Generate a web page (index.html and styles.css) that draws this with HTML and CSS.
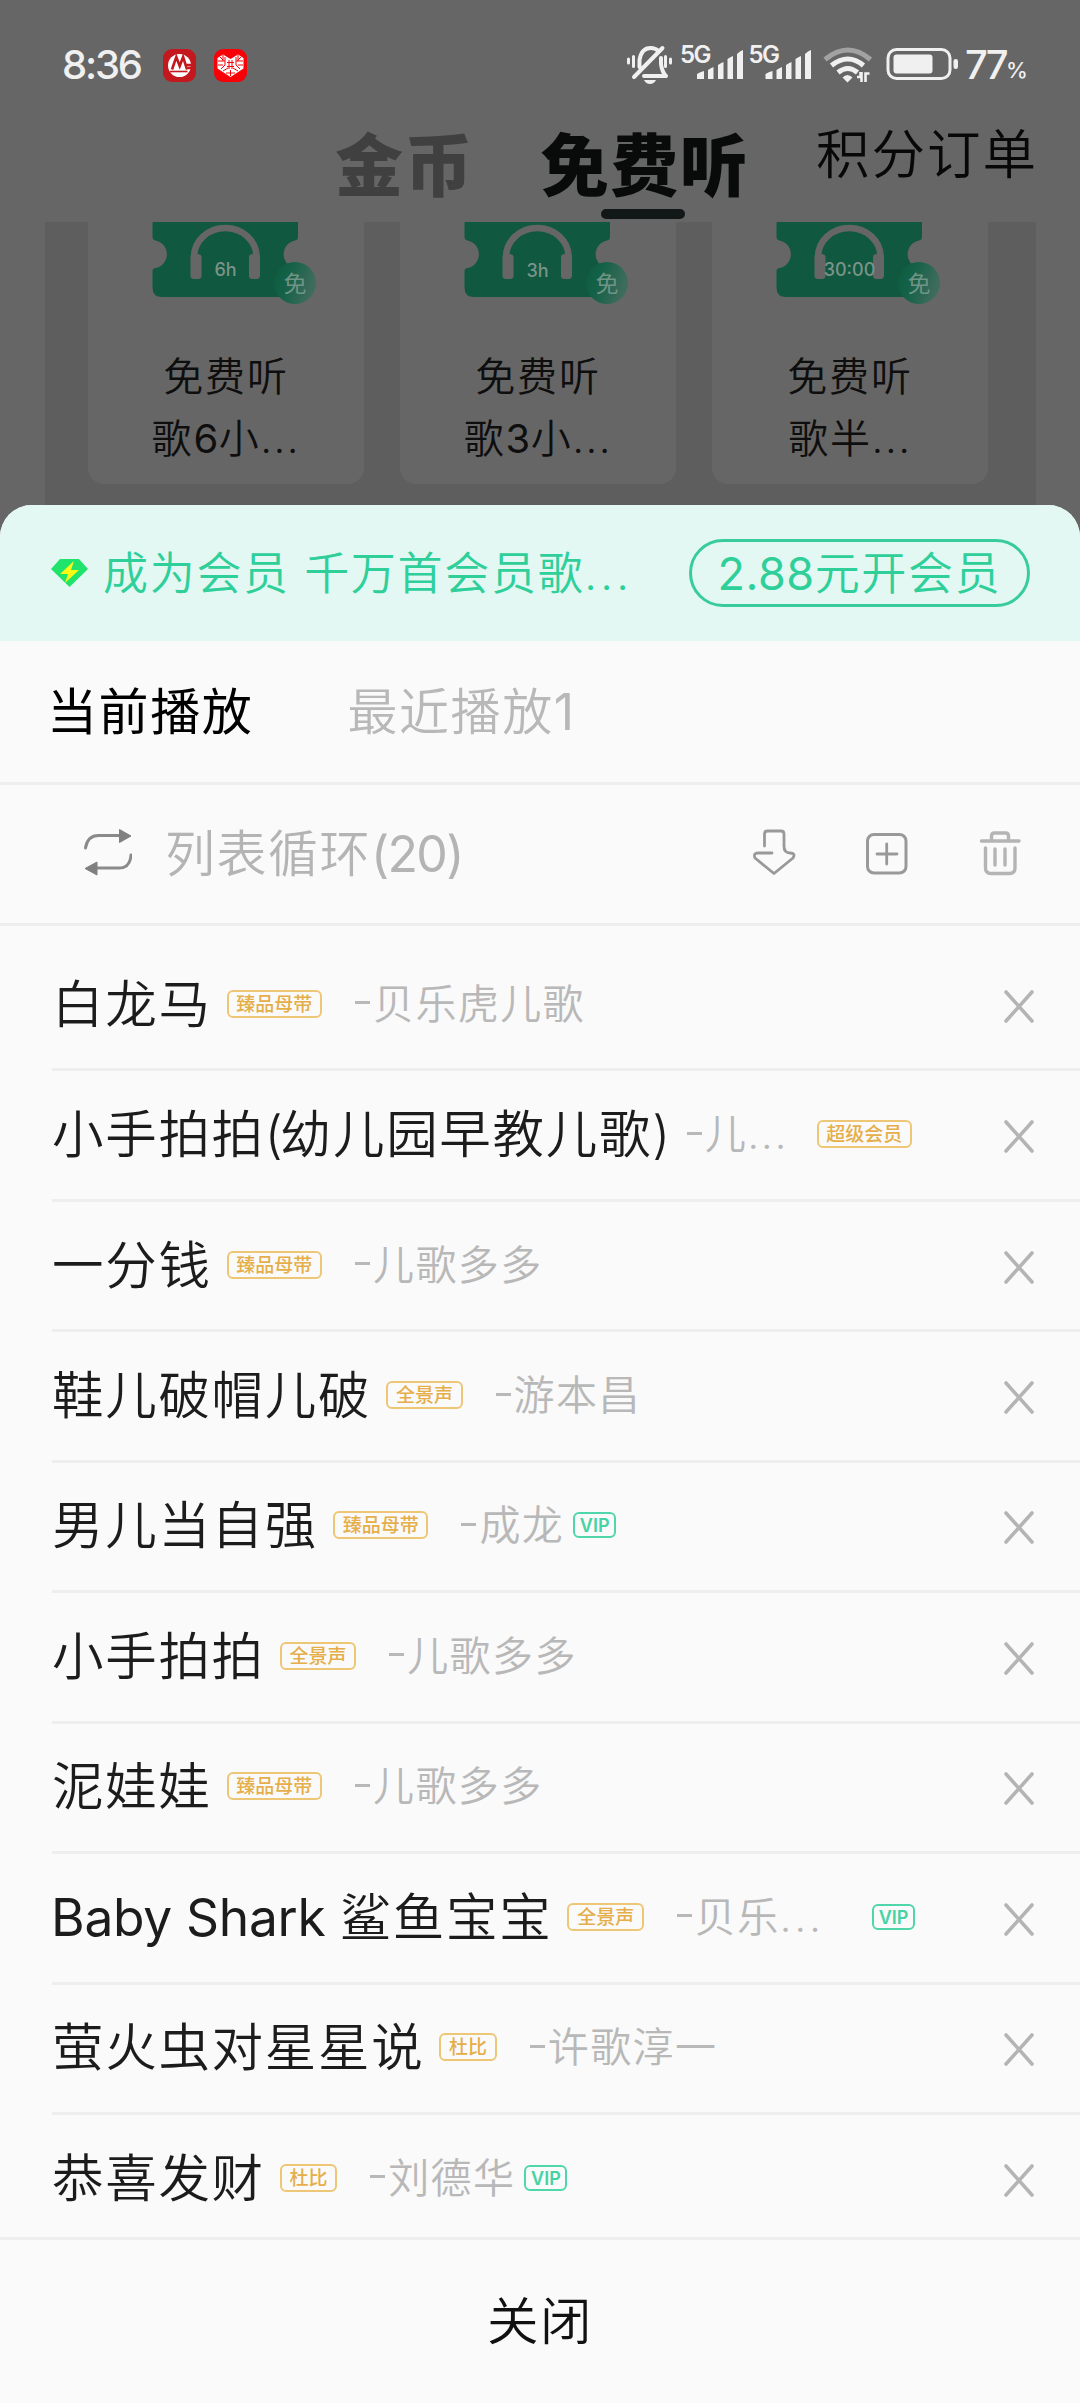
FILE: index.html
```html
<!DOCTYPE html>
<html lang="zh-CN">
<head>
<meta charset="utf-8">
<title>当前播放</title>
<link rel="stylesheet" href="styles.css">
</head>
<body>
<svg class="defs" aria-hidden="true">
  <defs>
    <linearGradient id="coin" x1="0" x2="1" y1="0" y2="0.3">
      <stop offset="0" stop-color="#0c5c42"/><stop offset="0.4" stop-color="#146147"/><stop offset="1" stop-color="#3e6c5d"/>
    </linearGradient>
    <symbol id="ticket" viewBox="88 222 276 100">
      <path fill="#10583f" d="M152.500 222H298v15q0 3-3 3.500a14 14 0 0 0 0 27.500q3 .5 3 3V297H162q-9.500 0-9.500-9.500V271q0-2.500 3-3a14 14 0 0 0 0-27.500q-3-.5-3-3.500z"/>
      <path fill="none" stroke="#666" stroke-width="6.500" d="M194 260v-3a31.300 29 0 0 1 62.600 0v3"/>
      <rect x="190.500" y="254" width="11" height="25" rx="3.500" fill="#666"/>
      <rect x="249" y="254" width="11" height="25" rx="3.500" fill="#666"/>
      <circle cx="295" cy="283" r="21" fill="url(#coin)"/>
      <text class="coin-text" x="295" y="292" text-anchor="middle">免</text>
    </symbol>
    <symbol id="close" viewBox="0 0 30 33">
      <path d="M2 2l26 29M28 2L2 31" fill="none" stroke="#b4b4b4" stroke-width="3.600" stroke-linecap="round"/>
    </symbol>
  </defs>
</svg>

<div class="backdrop">
  <div class="status">
    <span class="time">8:36</span>
    <svg class="app" viewBox="0 0 33 33"><rect width="33" height="33" rx="9" fill="#c3181d"/><circle cx="16.500" cy="16.500" r="11.500" fill="#fff"/><path d="M9 20.500L13.300 8l3.400 9 3.400-9 4 12.500" fill="none" stroke="#c3181d" stroke-width="2.600"/><path d="M7 22.500h17.500" stroke="#c3181d" stroke-width="1.600"/><path d="M22 16h7v3h-4" fill="none" stroke="#c3181d" stroke-width="2.600"/></svg>
    <svg class="app" viewBox="0 0 33 33"><rect width="33" height="33" rx="9" fill="#f80008"/><path d="M16.500 28L3.500 19.500V9l5.500-3.500 7.500 4.500 7.500-4.500L29.500 9v10.500z" fill="#fff"/><path d="M9 6v6M24 6v6M4 12h7M29 12h-7M11 8v8l-4 4M22 8v8l4 4M4 16h5M29 16h-5M13 13.500h7M13 17.500h7M15 11v9M18 11v9M9 22l5-3M24 22l-5-3M16.500 21v6M12 24h9M6 8l3 3M27 8l-3 3" fill="none" stroke="#f80008" stroke-width="1"/></svg>
    <svg class="signals" viewBox="627 45 338 42">
      <g fill="none" stroke="#f0f0f0" stroke-linecap="round" stroke-linejoin="round" stroke-width="4">
        <path d="M639.500 68V61q2-12 11-12 5 0 8 3M661 59v6q1 8 5 12H644M662.500 49L634 78"/>
        <path stroke-width="3" d="M628.500 60v4M633.500 57.500v10M665.500 57.500v10M670.500 60v4"/>
      </g>
      <path fill="#f0f0f0" d="M644 81h12q-2 4-6 4t-6-4z"/>
      <text class="net" x="680" y="63.500">5G</text>
      <text class="net" x="748.500" y="63.500">5G</text>
      <g fill="#f0f0f0">
        <path d="M697 75q3-2 7-3v8h-7zM708 71q3-2 5.500-3v12H708zM718 66q3-2 5.500-3v17H718zM727.500 60q3-2 5.500-3v23h-5.500zM737 55q3-3 6-4v29h-6z"/>
        <path d="M765.500 75q3-2 7-3v8h-7zM776.500 71q3-2 5.500-3v12h-5.500zM786 66q3-2 5.500-3v17H786zM795.500 60q3-2 5.500-3v23h-5.500zM805 55q3-3 6-4v29h-6z"/>
      </g>
      <g fill="none" stroke="#f0f0f0" stroke-width="5">
        <path stroke="#a2a2a2" d="M825 60.500q23-19 45.500 0"/>
        <path d="M831.500 66.500q16.500-13 32 0M838 73.500q10-8 19.500 0"/>
      </g>
      <path fill="#f0f0f0" d="M842.500 78.500q5-5 10 0l-5 5z"/>
      <path fill="none" stroke="#f0f0f0" stroke-width="2.600" d="M857 78h3.500v-5M861.500 83V73M865.500 83V74.500h4"/>
      <rect x="888" y="50.500" width="62" height="29" rx="8.500" fill="none" stroke="#f0f0f0" stroke-width="3"/>
      <rect x="893.500" y="55.500" width="39" height="19" rx="3" fill="#f0f0f0"/>
      <rect x="953.500" y="60" width="4.500" height="10" rx="2.200" fill="#f0f0f0"/>
    </svg>
    <span class="level">77</span><span class="percent">%</span>
  </div>

  <div class="nav">
    <span class="nav-tab muted">金币</span>
    <span class="nav-tab current">免费听</span>
    <span class="nav-link">积分订单</span>
  </div>

  <div class="panel">
    <div class="card">
      <svg class="ticket" viewBox="0 0 276 100"><use href="#ticket" width="276" height="100"/><text class="hours" x="137.500" y="54" text-anchor="middle">6h</text></svg>
      <div class="label">免费听<br>歌<span class="num">6</span>小<span class="dots">...</span></div>
    </div>
    <div class="card">
      <svg class="ticket" viewBox="0 0 276 100"><use href="#ticket" width="276" height="100"/><text class="hours" x="137.500" y="55" text-anchor="middle">3h</text></svg>
      <div class="label">免费听<br>歌<span class="num">3</span>小<span class="dots">...</span></div>
    </div>
    <div class="card">
      <svg class="ticket" viewBox="0 0 276 100"><use href="#ticket" width="276" height="100"/><text class="hours" x="137.500" y="54" text-anchor="middle">30:00</text></svg>
      <div class="label">免费听<br>歌半<span class="dots">...</span></div>
    </div>
  </div>
</div>

<div class="sheet">
  <div class="banner">
    <svg class="gem" viewBox="0 0 37 28"><path d="M9 0h19l9 10-18.500 18L0 10z" fill="#1fe36a"/><path d="M23 2L9 15h8l-3 9 14-13h-8z" fill="#f7fb14"/></svg>
    <span class="banner-text">成为会员 千万首会员歌<span class="dots wide">...</span></span>
    <span class="pill"><span class="num">2.88</span>元开会员</span>
  </div>
  <div class="tabs">
    <span class="tab active">当前播放</span>
    <span class="tab">最近播放<span class="num">1</span></span>
  </div>
  <div class="toolbar">
    <svg class="repeat" viewBox="84 829 48 47"><path d="M85.500 848q2-12.500 13-12.500h24M131 855q-1 13-12 13H94" fill="none" stroke="#8a8a8a" stroke-width="3" stroke-linecap="round"/><path d="M119.500 829.500l11.500 6.500-11.500 6.500zM97 862l-12 6.500 12 6.500z" fill="#808080" stroke="#808080" stroke-linejoin="round"/></svg>
    <span class="mode">列表循环<span class="count">(20)</span></span>
    <svg class="tool" viewBox="750 827 48 48"><path d="M764.500 845v-12q0-3 3-3H781q3 0 3 3v12q0 7 6 7 6 0 3 5l-19 15.500L755 857q-2-5 3-5h14" fill="none" stroke="#999" stroke-width="2.800" stroke-linecap="round" stroke-linejoin="round"/></svg>
    <svg class="tool" viewBox="863 827 48 48"><rect x="867.500" y="833.500" width="38.500" height="38.500" rx="6.500" fill="none" stroke="#999" stroke-width="3"/><path d="M886.700 843v20M877 853h20" stroke="#999" stroke-width="2.800" stroke-linecap="round"/></svg>
    <svg class="tool" viewBox="977 827 48 48"><path d="M982.500 840H1020M992.500 839v-4q0-3 3-3h11q3 0 3 3v4M986.500 847v20q0 5.500 5.500 5.500h18.500q5.500 0 5.500-5.500v-20M996 848v16M1006 848v16" fill="none" stroke="#b4b4b4" stroke-width="3.400" stroke-linecap="round"/></svg>
  </div>

  <div class="list">
    <div class="row"><div class="song"><span class="title">白龙马</span><span class="tag">臻品母带</span><span class="artist">贝乐虎儿歌</span></div><svg class="close"><use href="#close"/></svg></div>
    <div class="row"><div class="song"><span class="title">小手拍拍<span class="paren">(</span>幼儿园早教儿歌<span class="paren">)</span></span><span class="artist short">儿<span class="dots">...</span></span><span class="tag super">超级会员</span></div><svg class="close"><use href="#close"/></svg></div>
    <div class="row"><div class="song"><span class="title">一分钱</span><span class="tag">臻品母带</span><span class="artist">儿歌多多</span></div><svg class="close"><use href="#close"/></svg></div>
    <div class="row"><div class="song"><span class="title">鞋儿破帽儿破</span><span class="tag">全景声</span><span class="artist">游本昌</span></div><svg class="close"><use href="#close"/></svg></div>
    <div class="row"><div class="song"><span class="title">男儿当自强</span><span class="tag">臻品母带</span><span class="artist">成龙</span><span class="vip">VIP</span></div><svg class="close"><use href="#close"/></svg></div>
    <div class="row"><div class="song"><span class="title">小手拍拍</span><span class="tag">全景声</span><span class="artist">儿歌多多</span></div><svg class="close"><use href="#close"/></svg></div>
    <div class="row"><div class="song"><span class="title">泥娃娃</span><span class="tag">臻品母带</span><span class="artist">儿歌多多</span></div><svg class="close"><use href="#close"/></svg></div>
    <div class="row"><div class="song"><span class="title"><span class="latin">Baby Shark </span>鲨鱼宝宝</span><span class="tag">全景声</span><span class="artist">贝乐<span class="dots wide">...</span></span><span class="vip end">VIP</span></div><svg class="close"><use href="#close"/></svg></div>
    <div class="row"><div class="song"><span class="title">萤火虫对星星说</span><span class="tag">杜比</span><span class="artist">许歌淳一</span></div><svg class="close"><use href="#close"/></svg></div>
    <div class="row"><div class="song"><span class="title">恭喜发财</span><span class="tag">杜比</span><span class="artist">刘德华</span><span class="vip">VIP</span></div><svg class="close"><use href="#close"/></svg></div>
  </div>
  <div class="footer">关闭</div>
</div>
</body>
</html>
```
FILE: styles.css
```css
* { box-sizing: border-box; }
body {
  margin: 0;
  width: 1080px;
  height: 2403px;
  overflow: hidden;
  background: #666;
  font-family: Inter, "Noto Sans CJK SC", sans-serif;
  font-weight: 350;
  white-space: nowrap;
}
svg { display: block; flex: none; }
.defs { position: absolute; width: 0; height: 0; }
.num { font-weight: 400; letter-spacing: 0.5px; }

.backdrop { height: 505px; display: flex; flex-direction: column; }
.status {
  height: 108px;
  padding: 22px 0 0 62px;
  display: flex;
  align-items: center;
  color: #f0f0f0;
}
.time { width: 101px; font-size: 40px; line-height: 44px; font-weight: 500; letter-spacing: -2.2px; }
.app { width: 33px; height: 33px; margin-right: 18px; }
.signals { width: 338px; height: 42px; margin-left: 362px; overflow: visible; }
.net { font-size: 24px; font-weight: 600; fill: #f0f0f0; letter-spacing: -1.5px; }
.level { width: 41px; font-size: 40px; line-height: 44px; font-weight: 500; letter-spacing: -3px; }
.percent { font-size: 22px; line-height: 30px; font-weight: 500; padding-top: 9px; }

.nav {
  height: 114px;
  padding-left: 335px;
  display: flex;
  align-items: flex-start;
  color: #090b0b;
}
.nav-tab {
  height: 111px;
  font-size: 68px;
  line-height: 116px;
  font-weight: 800;
  letter-spacing: 1.5px;
  margin-right: 67px;
}
.muted { color: #404040; }
.current { width: 208px; display: flex; flex-direction: column; align-items: center; }
.current::after { content: ""; width: 84px; height: 10px; margin: -15px 4px 0 0; border-radius: 5px; background: #111817; flex: none; }
.nav-link { font-size: 53.5px; line-height: 93px; letter-spacing: 2px; color: #080808; }

.panel {
  flex: 1;
  margin: 0 44px 0 45px;
  padding: 0 48px 21px 43px;
  background: #5e5e5e;
  display: flex;
  gap: 36px;
}
.card { width: 276px; background: #666; border-radius: 0 0 16px 16px; }
.ticket { width: 276px; height: 100px; }
.hours { font-size: 18px; font-weight: 500; fill: #7b9388; }
.coin-text { font-size: 23px; font-weight: 400; fill: #6f9485; }
.label { padding-top: 24px; text-align: center; font-size: 40px; line-height: 62px; letter-spacing: 1.8px; color: #0e0e0e; }
.dots { letter-spacing: 2px; }
.dots.wide { letter-spacing: 3.2px; }

.sheet { height: 1898px; border-radius: 32px 32px 0 0; background: #fafafa; overflow: hidden; display: flex; flex-direction: column; }
.banner {
  height: 136px;
  padding: 0 50px 0 51px;
  background: #e4f8f3;
  color: #2fcf9a;
  display: flex;
  align-items: center;
}
.gem { width: 37px; height: 28px; }
.banner-text { margin-left: 15px; padding-top: 2px; font-size: 45px; letter-spacing: 1.7px; line-height: 60px; }
.pill {
  width: 341px;
  height: 68px;
  margin-left: auto;
  border: 3px solid #38cc9b;
  border-radius: 34px;
  font-size: 45px;
  line-height: 64px;
  letter-spacing: 1.7px;
  text-align: center;
}
.tabs { height: 144px; padding: 1px 0 0 47px; display: flex; align-items: center; gap: 94px; border-bottom: 3px solid #eee; }
.tab { font-size: 50px; line-height: 60px; letter-spacing: 1.6px; color: #b8b8b8; }
.active { color: #000; font-weight: 400; }
.toolbar { height: 141px; padding: 0 56px 0 84px; display: flex; align-items: center; border-bottom: 3px solid #eee; }
.repeat { width: 48px; height: 47px; margin-bottom: 3px; }
.mode { margin: 0 auto 0 33px; font-size: 50px; line-height: 60px; letter-spacing: 1.5px; color: #b4b4b4; }
.count { font-weight: 400; letter-spacing: -1.7px; }
.tool { width: 48px; height: 48px; margin: 0 0 5px 65px; }

.list { height: 1311px; padding: 15px 0 0 52px; overflow: hidden; }
.row { height: 130.45px; display: flex; align-items: center; border-bottom: 3px solid #eee; padding-right: 46px; }
.song { width: 863px; height: 80px; margin-bottom: 2px; display: flex; align-items: center; }
.title { font-size: 51.5px; line-height: 70px; letter-spacing: 1.7px; color: #1c1c1c; }
.paren { letter-spacing: -3px; }
.latin { font-weight: 400; letter-spacing: -0.3px; margin-left: -1px; }
.tag, .vip { height: 28px; border: 2px solid #edc676; border-radius: 6px; color: #e5ae49; text-align: center; flex: none; }
.tag { margin-left: 15px; padding: 0 7.7px; font-size: 19px; line-height: 25px; font-weight: 500; }
.artist { margin-left: 33px; font-size: 41px; line-height: 60px; letter-spacing: 1.4px; color: #b8b8b8; display: flex; align-items: center; }
/* short rule that joins the title to the artist name */
.artist::before { content: ""; width: 15px; height: 3px; margin: 0 3px 2px 0; background: #b8b8b8; }
.artist.short { margin-left: 20px; }
.tag.super, .vip.end { margin-left: auto; }
.tag.super { margin-right: 3px; }
.vip { width: 43px; height: 26px; margin-left: 9px; border-color: #4fd6aa; color: #45d3a4; font-size: 18px; line-height: 23px; font-weight: 600; }
.close { width: 30px; height: 33px; margin: 3px 0 0 auto; }
.footer { flex: 1; display: flex; align-items: center; justify-content: center; padding-bottom: 2px; border-top: 3px solid #eee; font-size: 51.5px; line-height: 60px; letter-spacing: 1.5px; color: #111; }
```
